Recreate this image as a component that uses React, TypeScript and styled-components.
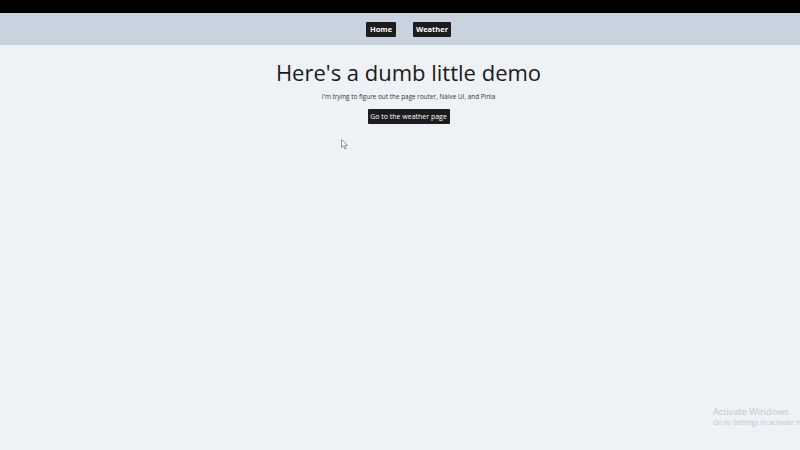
import React from "react";
import styled, { createGlobalStyle } from "styled-components";

const Global = createGlobalStyle`
  html, body { margin: 0; padding: 0; background: #eef1f5; }
  body { font-family: "Open Sans", "Noto Sans", sans-serif; }
`;

const Page = styled.div`
  position: relative;
  width: 800px;
  height: 450px;
  overflow: hidden;
  background: #eef1f5;
  display: flex;
  flex-direction: column;
`;

const TopStrip = styled.div`
  height: 13px;
  background: #000;
`;

const NavBar = styled.nav`
  height: 32px;
  background: #c9d2df;
  display: flex;
  justify-content: center;
  align-items: center;
  gap: 17px;
  padding-left: 17px;
`;

const DarkButton = styled.button<{ $w: number; $h?: number; $fs?: number; $weight?: number }>`
  width: ${(p) => p.$w}px;
  height: ${(p) => p.$h ?? 15}px;
  background: #1c1c1e;
  color: #fff;
  border: none;
  border-radius: 1px;
  padding: 0;
  font-family: "Open Sans", "Noto Sans", sans-serif;
  font-size: ${(p) => p.$fs ?? 7.5}px;
  font-weight: ${(p) => p.$weight ?? 700};
  display: flex;
  align-items: center;
  justify-content: center;
  cursor: pointer;
`;

const Main = styled.main`
  display: flex;
  flex-direction: column;
  align-items: center;
  padding-top: 12px;
  padding-left: 17px;
`;

const Title = styled.h1`
  margin: 0;
  font-family: "Open Sans", "Noto Sans", sans-serif;
  font-weight: 400;
  font-size: 22px;
  line-height: 30px;
  color: #1a1a1a;
`;

const Sub = styled.p`
  margin: 4px 0 7px;
  font-size: 6.4px;
  line-height: 11px;
  color: #333;
`;

const Watermark = styled.div`
  position: absolute;
  left: 713px;
  top: 406px;
  color: #c3c7cc;
  font-family: "Open Sans", "Noto Sans", sans-serif;
  white-space: nowrap;
`;

const WmTitle = styled.div`
  font-size: 9.2px;
  line-height: 12px;
`;

const WmSub = styled.div`
  font-size: 7px;
  line-height: 10px;
`;

const Cursor = styled.svg`
  position: absolute;
  left: 341px;
  top: 139px;
`;

export default function App() {
  return (
    <Page>
      <Global />
      <TopStrip />
      <NavBar>
        <DarkButton $w={30}>Home</DarkButton>
        <DarkButton $w={38}>Weather</DarkButton>
      </NavBar>
      <Main>
        <Title>Here's a dumb little demo</Title>
        <Sub>I'm trying to figure out the page router, Naive UI, and Pinia</Sub>
        <DarkButton $w={82} $fs={7} $weight={400}>
          Go to the weather page
        </DarkButton>
      </Main>
      <Cursor width="8" height="11" viewBox="0 0 8 11">
        <path d="M0.5 0.5 L0.5 8.5 L2.5 6.8 L4 10 L5.2 9.4 L3.8 6.3 L6.5 6.3 Z" fill="#fff" stroke="#777" strokeWidth="0.8" />
      </Cursor>
      <Watermark>
        <WmTitle>Activate Windows</WmTitle>
        <WmSub>Go to Settings to activate Windows.</WmSub>
      </Watermark>
    </Page>
  );
}
